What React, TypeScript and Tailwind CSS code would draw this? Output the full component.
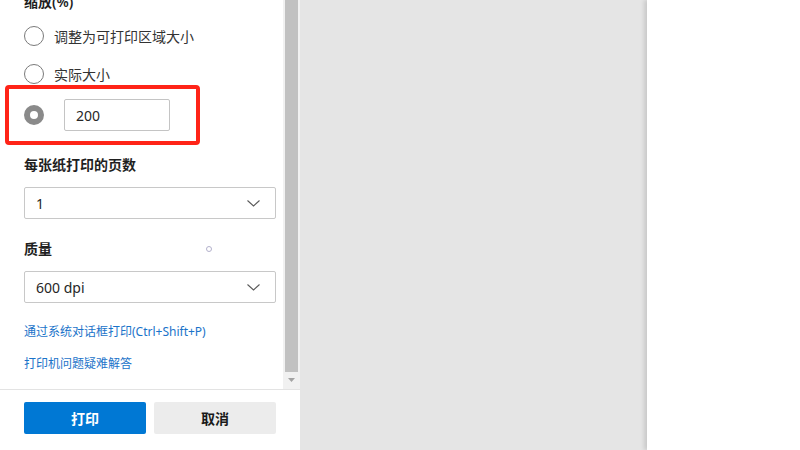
const font = { fontFamily: '"Noto Sans", "Noto Sans CJK SC", sans-serif' };

function Radio({ checked }: { checked?: boolean }) {
  return checked ? (
    <span className="block w-[20px] h-[20px] rounded-full border-[6px] border-[#8a8a8a] bg-white shrink-0" />
  ) : (
    <span className="block w-[20px] h-[20px] rounded-full border border-[#7a7a7a] bg-white shrink-0" />
  );
}

function Select({ value }: { value: string }) {
  return (
    <div className="h-[32px] w-[252px] border border-[#c8c8c8] rounded-[2px] flex items-center justify-between pl-[11px] pr-[15px] text-[14px] text-[#262626]">
      <span>{value}</span>
      <svg width="13" height="7" viewBox="0 0 13 7" fill="none">
        <polyline points="0.5,0.5 6.5,6 12.5,0.5" stroke="#5a5a5a" strokeWidth="1.1" />
      </svg>
    </div>
  );
}

export default function App() {
  return (
    <div className="w-[800px] h-[450px] flex bg-white overflow-hidden" style={font}>
      <aside className="w-[300px] h-full flex flex-col bg-white">
        <div className="h-[389px] flex overflow-hidden">
          <div className="flex-1 pl-[24px] flex flex-col">
            <h3 className="mt-[-8px] h-[20px] leading-[20px] text-[14px] font-semibold text-[#1f1f1f]">缩放(%)</h3>
            <label className="mt-[14px] h-[20px] flex items-center gap-[10px] text-[14px] text-[#333]">
              <Radio />
              <span>调整为可打印区域大小</span>
            </label>
            <label className="mt-[18px] h-[20px] flex items-center gap-[10px] text-[14px] text-[#333]">
              <Radio />
              <span>实际大小</span>
            </label>
            <div className="relative mt-[15px] h-[32px] flex items-center gap-[20px]">
              <Radio checked />
              <div className="w-[106px] h-[32px] border border-[#c4c4c4] rounded-[2px] flex items-center pl-[11px] text-[14px] text-[#262626]">
                200
              </div>
              <div className="absolute left-[-19px] top-[-14px] w-[195px] h-[60px] border-[4px] border-[#ff2418] rounded-[4px]" />
            </div>
            <h3 className="mt-[24px] h-[20px] leading-[20px] text-[14px] font-semibold text-[#1f1f1f]">每张纸打印的页数</h3>
            <div className="mt-[12px]">
              <Select value="1" />
            </div>
            <div className="mt-[20px] h-[20px] flex items-center">
              <h3 className="w-[182px] leading-[20px] text-[14px] font-semibold text-[#1f1f1f]">质量</h3>
              <span className="block w-[6px] h-[6px] rounded-full border border-[#b3b1cc]" />
            </div>
            <div className="mt-[12px]">
              <Select value="600 dpi" />
            </div>
            <a className="mt-[21px] h-[16px] leading-[16px] text-[12px] text-[#1a73c9]">通过系统对话框打印(Ctrl+Shift+P)</a>
            <a className="mt-[16px] h-[16px] leading-[16px] text-[12px] text-[#1a73c9]">打印机问题疑难解答</a>
          </div>
          <div className="w-[17px] h-full bg-[#f1f1f1] flex flex-col items-center">
            <div className="w-[13px] h-[372px] bg-[#c1c1c1]" />
            <svg className="mt-[6px]" width="7" height="4" viewBox="0 0 7 4">
              <polygon points="0,0 7,0 3.5,4" fill="#a3a3a3" />
            </svg>
          </div>
        </div>
        <div className="flex-1 border-t border-[#e3e3e3] flex gap-[8px] pl-[24px] pt-[12px]">
          <button className="w-[122px] h-[32px] rounded-[2px] bg-[#0078d4] text-white text-[14px] font-bold">打印</button>
          <button className="w-[122px] h-[32px] rounded-[2px] bg-[#ececec] text-[#1a1a1a] text-[14px] font-bold">取消</button>
        </div>
      </aside>
      <main className="flex-1 h-full bg-[#e5e5e5]" />
      <div className="w-[153px] h-full bg-white shadow-[-3px_0_4px_rgba(0,0,0,0.12)]" />
    </div>
  );
}
